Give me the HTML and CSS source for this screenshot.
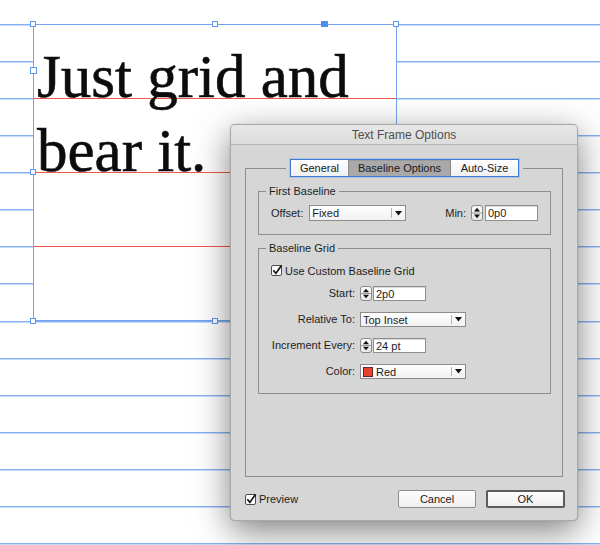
FILE: index.html
```html
<!DOCTYPE html>
<html>
<head>
<meta charset="utf-8">
<title>Text Frame Options</title>
<link rel="stylesheet" href="styles.css">
</head>
<body>
<div class="canvas">
  <div class="grid">
    <div class="gl"></div><div class="gl"></div><div class="gl"></div><div class="gl"></div><div class="gl"></div>
    <div class="gl"></div><div class="gl"></div><div class="gl"></div><div class="gl"></div><div class="gl"></div>
    <div class="gl"></div><div class="gl"></div><div class="gl"></div><div class="gl"></div><div class="gl"></div>
  </div>

  <div class="frame">
    <p class="story">Just grid and<br>bear it.</p>
  </div>

  <span class="h h-tl"></span>
  <span class="h h-tm"></span>
  <span class="h h-tr"></span>
  <span class="h h-in"></span>
  <span class="h h-ml"></span>
  <span class="h h-bl"></span>
  <span class="h h-bm"></span>
  <span class="h-fill"></span>

  <div class="dialog">
    <div class="titlebar">Text Frame Options</div>
    <div class="dbody">
      <fieldset class="tabgroup">
        <legend class="tablegend">
          <div class="tabs">
            <span class="tab t1">General</span>
            <span class="tab t2 sel">Baseline Options</span>
            <span class="tab t3">Auto-Size</span>
          </div>
        </legend>

        <fieldset class="group g1">
          <legend>First Baseline</legend>
          <div class="row1">
            <div class="pair">
              <span class="lbl">Offset:</span>
              <div class="select s-offset">
                <span class="val">Fixed</span>
                <span class="drop"><svg width="7" height="5" viewBox="0 0 7 5"><polygon points="0,0 7,0 3.5,4.6" fill="#111"/></svg></span>
              </div>
            </div>
            <div class="pair">
              <span class="lbl">Min:</span>
              <span class="stepper"><svg width="10" height="14" viewBox="0 0 10 14" preserveAspectRatio="none"><polygon points="2,5.6 5,1.8 8,5.6" fill="#111"/><line x1="0" y1="7" x2="10" y2="7" stroke="#9a9a9a" stroke-width="1"/><polygon points="2,8.4 5,12.2 8,8.4" fill="#111"/></svg></span>
              <span class="field">0p0</span>
            </div>
          </div>
        </fieldset>

        <fieldset class="group g2">
          <legend>Baseline Grid</legend>
          <div class="check">
            <span class="box"><svg width="13" height="13" viewBox="0 0 13 13"><path d="M2.3 6.2 L4.9 9.4 L10.6 1.2" fill="none" stroke="#111" stroke-width="1.7"/></svg></span>
            <span>Use Custom Baseline Grid</span>
          </div>
          <div class="form">
            <span class="fl">Start:</span>
            <div class="ctl">
              <span class="stepper st-sm"><svg width="10" height="13" viewBox="0 0 10 14" preserveAspectRatio="none"><polygon points="2,5.6 5,1.8 8,5.6" fill="#111"/><line x1="0" y1="7" x2="10" y2="7" stroke="#9a9a9a" stroke-width="1"/><polygon points="2,8.4 5,12.2 8,8.4" fill="#111"/></svg></span>
              <span class="field f-sm">2p0</span>
            </div>

            <span class="fl">Relative To:</span>
            <div class="ctl">
              <div class="select s-wide">
                <span class="val">Top Inset</span>
                <span class="drop"><svg width="7" height="5" viewBox="0 0 7 5"><polygon points="0,0 7,0 3.5,4.6" fill="#111"/></svg></span>
              </div>
            </div>

            <span class="fl">Increment Every:</span>
            <div class="ctl">
              <span class="stepper st-sm"><svg width="10" height="13" viewBox="0 0 10 14" preserveAspectRatio="none"><polygon points="2,5.6 5,1.8 8,5.6" fill="#111"/><line x1="0" y1="7" x2="10" y2="7" stroke="#9a9a9a" stroke-width="1"/><polygon points="2,8.4 5,12.2 8,8.4" fill="#111"/></svg></span>
              <span class="field f-sm">24 pt</span>
            </div>

            <span class="fl">Color:</span>
            <div class="ctl">
              <div class="select s-wide">
                <span class="val"><span class="swatch"></span>Red</span>
                <span class="drop"><svg width="7" height="5" viewBox="0 0 7 5"><polygon points="0,0 7,0 3.5,4.6" fill="#111"/></svg></span>
              </div>
            </div>
          </div>
        </fieldset>
      </fieldset>

      <div class="footer">
        <div class="check preview">
          <span class="box"><svg width="13" height="13" viewBox="0 0 13 13"><path d="M2.3 6.2 L4.9 9.4 L10.6 1.2" fill="none" stroke="#111" stroke-width="1.7"/></svg></span>
          <span>Preview</span>
        </div>
        <div class="buttons">
          <span class="btn">Cancel</span>
          <span class="btn ok">OK</span>
        </div>
      </div>
    </div>
  </div>
</div>
</body>
</html>
```

FILE: styles.css
```css
* { box-sizing: border-box; }
html, body { margin: 0; padding: 0; }
body {
  width: 600px;
  height: 545px;
  overflow: hidden;
  background: #fff;
  font-family: "Liberation Sans", Arial, sans-serif;
}
.canvas {
  position: relative;
  width: 600px;
  height: 545px;
  overflow: hidden;
}

/* baseline grid of the document */
.grid {
  position: absolute;
  left: 0;
  top: 24px;
  width: 600px;
  display: grid;
  grid-auto-rows: 37.07px;
}
.gl {
  height: 0;
  align-self: start;
  border-top: 1px solid #85b1f2;
  box-shadow: 0 1px 0 #c6dbfa;
}

/* text frame */
.frame {
  position: absolute;
  left: 33px;
  top: 24px;
  width: 364px;
  height: 297px;
  border: 1px solid #72a2f1;
  background-color: #fff;
  background-image: linear-gradient(to bottom,
    transparent 0, transparent 73px,
    #ee5849 73px, #ee5849 74px,
    #f6b1a9 74px, #f6b1a9 75px,
    transparent 75px);
  background-size: 100% 74px;
  background-repeat: repeat-y;
}
.story {
  margin: 0;
  padding: 15px 0 0 3px;
  font-family: "Liberation Serif", "Times New Roman", serif;
  font-size: 61px;
  line-height: 74px;
  color: #0c0c0c;
  -webkit-text-stroke: 0.6px #0c0c0c;
  white-space: nowrap;
}

/* selection handles */
.h {
  position: absolute;
  width: 6px;
  height: 6px;
  background: #fff;
  border: 1px solid #5c97ef;
}
.h-tl { left: 30px; top: 21px; }
.h-tm { left: 212px; top: 21px; }
.h-tr { left: 393px; top: 21px; }
.h-in { left: 30px; top: 67px; width: 7px; height: 7px; }
.h-ml { left: 30px; top: 169px; }
.h-bl { left: 30px; top: 318px; }
.h-bm { left: 212px; top: 318px; }
.h-fill {
  position: absolute;
  left: 321px;
  top: 21px;
  width: 7px;
  height: 6px;
  background: #4d8ff0;
}

/* dialog */
.dialog {
  position: absolute;
  left: 230px;
  top: 124px;
  width: 348px;
  height: 397px;
  background: #d6d6d6;
  border: 1px solid #a9a9a9;
  border-radius: 5px;
  box-shadow: 0 10px 34px rgba(0, 0, 0, 0.5), 0 0 1px rgba(0, 0, 0, 0.3);
  display: flex;
  flex-direction: column;
  font-size: 11px;
  color: #1d1d1d;
}
.titlebar {
  height: 20px;
  border-bottom: 1px solid #b4b4b4;
  background: linear-gradient(#e7e7e7, #dddddd);
  border-radius: 4px 4px 0 0;
  text-align: center;
  line-height: 21px;
  font-size: 12px;
  color: #4f4f4f;
}
.dbody {
  padding: 14px 14px 12px 14px;
  display: flex;
  flex-direction: column;
}

fieldset {
  margin: 0;
  min-width: 0;
  border: 1px solid #8e8e8e;
}
.tabgroup {
  padding: 7px 11px 82px 12px;
}
.tablegend {
  margin: 0 auto;
  padding: 0 4px;
}
.tabs {
  display: flex;
  height: 18px;
  border: 1px solid #3c7cd8;
  box-shadow: 0 0 0 1px rgba(110, 160, 230, 0.35);
}
.tab {
  display: flex;
  align-items: center;
  justify-content: center;
  background: linear-gradient(#ffffff, #f0f0f0);
  color: #1a1a1a;
  line-height: 16px;
}
.tab + .tab { border-left: 1px solid #8a8a8a; }
.t1 { width: 57px; }
.t2 { width: 102px; }
.t3 { width: 68px; }
.tab.sel {
  background: #a9a9a9;
  box-shadow: inset 0 1px 0 #9a9a9a;
}

.group legend {
  margin-left: -5px;
  padding: 0 3px;
  height: 14px;
  line-height: 14px;
}
.g1 { padding: 7px 12px 13px 12px; }
.g2 { padding: 8px 12px 14px 12px; margin-top: 6px; }

.row1 {
  display: flex;
  justify-content: space-between;
  align-items: center;
  height: 16px;
}
.pair {
  display: flex;
  align-items: center;
}
.lbl { margin-right: 6px; }
.pair .lbl + .stepper { margin-left: -1px; }

.select {
  display: flex;
  align-items: stretch;
  height: 16px;
  border: 1px solid #8c8c8c;
  background: linear-gradient(#ffffff, #f1f1f1);
}
.s-offset { width: 97px; }
.s-wide { width: 106px; height: 15px; }
.select .val {
  flex: 1;
  display: flex;
  align-items: center;
  padding-left: 2px;
  white-space: nowrap;
}
.drop {
  width: 14px;
  display: flex;
  align-items: center;
  justify-content: center;
  position: relative;
}
.drop::before {
  content: "";
  position: absolute;
  left: 0;
  top: 2px;
  bottom: 2px;
  border-left: 1px solid #b3b3b3;
}
.swatch {
  width: 10px;
  height: 10px;
  margin-right: 3px;
  background: #e8412f;
  border: 1px solid #5a2a22;
}

.stepper {
  width: 12px;
  height: 16px;
  border: 1px solid #8a8a8a;
  border-radius: 3px;
  background: linear-gradient(#fafafa, #e9e9e9);
  display: flex;
  align-items: stretch;
  justify-content: center;
}
.stepper svg { display: block; }
.st-sm { height: 15px; }
.field {
  width: 53px;
  height: 16px;
  margin-left: 2px;
  border: 1px solid #8f8f8f;
  background: #fff;
  box-shadow: inset 0 1px 0 #d8d8d8;
  padding-left: 2px;
  display: flex;
  align-items: center;
}
.f-sm { height: 15px; margin-left: 1px; }

.check {
  display: flex;
  align-items: center;
  height: 15px;
  margin-bottom: 8px;
}
.box {
  position: relative;
  width: 11px;
  height: 11px;
  margin-right: 3px;
  border: 1px solid #4c4c4c;
  border-radius: 2px;
  background: #fff;
}
.box svg {
  position: absolute;
  left: -1px;
  top: -2px;
}

.form {
  display: grid;
  grid-template-columns: 84px auto;
  column-gap: 5px;
  row-gap: 11px;
}
.fl {
  text-align: right;
  line-height: 15px;
  white-space: nowrap;
}
.ctl {
  display: flex;
  align-items: center;
  height: 15px;
}

.footer {
  margin-top: 13px;
  margin-right: -2px;
  height: 18px;
  display: flex;
  align-items: center;
  justify-content: space-between;
}
.preview { margin-bottom: 0; }
.buttons {
  display: flex;
  gap: 10px;
}
.btn {
  width: 78px;
  height: 18px;
  border: 1px solid #8d8d8d;
  border-radius: 2px;
  background: linear-gradient(#fdfdfd, #efefef);
  display: flex;
  align-items: center;
  justify-content: center;
  color: #1a1a1a;
}
.btn.ok {
  width: 79px;
  border: 2px solid #5c5c5c;
}
```
